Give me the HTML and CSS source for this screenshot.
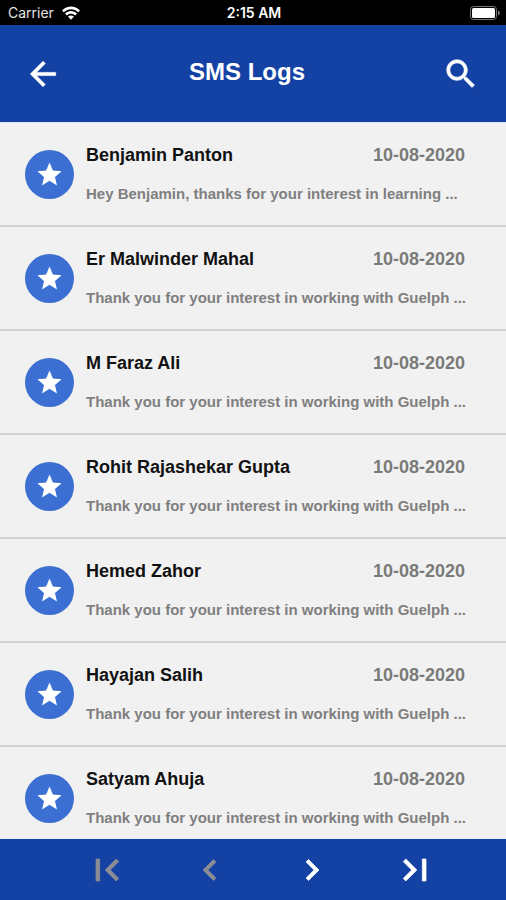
FILE: index.html
```html
<!DOCTYPE html>
<html lang="en">
<head>
<meta charset="utf-8">
<meta name="viewport" content="width=device-width, initial-scale=1">
<title>SMS Logs</title>
<link rel="stylesheet" href="styles.css">
</head>
<body>
<svg class="symbols" aria-hidden="true">
  <symbol id="star" viewBox="0 0 24 24"><path d="M12 17.27L18.18 21l-1.64-7.03L22 9.24l-7.19-.61L12 2 9.19 8.63 2 9.24l5.46 4.73L5.82 21z"/></symbol>
</svg>
<div class="status">
  <div class="carrier">
    <span>Carrier</span>
    <svg class="wifi" viewBox="0 0 18 14" aria-hidden="true">
      <path d="M0 4.4C5-.8 13-.8 18 4.4L16.2 6.3C12.2 2.2 5.8 2.2 1.8 6.3z"/>
      <path d="M3 7.5C6.400 4.100 11.600 4.100 15 7.500L13.200 9.400C10.800 7.100 7.200 7.100 4.800 9.400z"/>
      <path d="M6 10.600C7.700 9.100 10.300 9.100 12 10.600L9 13.700z"/>
    </svg>
  </div>
  <time class="clock">2:15 AM</time>
  <svg class="battery" viewBox="0 0 30 14" aria-hidden="true">
    <rect class="shell" x="0.500" y="0.500" width="26" height="13" rx="3"/>
    <rect x="2" y="2" width="23" height="10" rx="1.500"/>
    <path class="tip" d="M28 4.500c2.500.8 2.500 4.200 0 5z"/>
  </svg>
</div>
<header class="bar">
  <button class="icon-button" aria-label="Back"><svg viewBox="0 0 24 24"><path d="M20 11H7.830l5.590-5.590L12 4l-8 8 8 8 1.410-1.410L7.830 13H20z"/></svg></button>
  <h1>SMS Logs</h1>
  <button class="icon-button" aria-label="Search"><svg viewBox="0 0 24 24"><path d="M15.500 14h-.79l-.28-.27C15.410 12.590 16 11.110 16 9.500 16 5.910 13.090 3 9.500 3S3 5.910 3 9.500 5.910 16 9.500 16c1.610 0 3.090-.59 4.230-1.570l.27.28v.79l5 4.990L20.490 19zm-6 0C7.010 14 5 11.990 5 9.500S7.010 5 9.500 5 14 7.010 14 9.500 11.990 14 9.500 14z"/></svg></button>
</header>
<main class="logs">
  <ul>
    <li class="log"><span class="badge"><svg><use href="#star"/></svg></span><div class="body"><div class="top"><h2>Benjamin Panton</h2><time>10-08-2020</time></div><p>Hey Benjamin, thanks for your interest in learning ...</p></div></li>
    <li class="log"><span class="badge"><svg><use href="#star"/></svg></span><div class="body"><div class="top"><h2>Er Malwinder Mahal</h2><time>10-08-2020</time></div><p>Thank you for your interest in working with Guelph ...</p></div></li>
    <li class="log"><span class="badge"><svg><use href="#star"/></svg></span><div class="body"><div class="top"><h2>M Faraz Ali</h2><time>10-08-2020</time></div><p>Thank you for your interest in working with Guelph ...</p></div></li>
    <li class="log"><span class="badge"><svg><use href="#star"/></svg></span><div class="body"><div class="top"><h2>Rohit Rajashekar Gupta</h2><time>10-08-2020</time></div><p>Thank you for your interest in working with Guelph ...</p></div></li>
    <li class="log"><span class="badge"><svg><use href="#star"/></svg></span><div class="body"><div class="top"><h2>Hemed Zahor</h2><time>10-08-2020</time></div><p>Thank you for your interest in working with Guelph ...</p></div></li>
    <li class="log"><span class="badge"><svg><use href="#star"/></svg></span><div class="body"><div class="top"><h2>Hayajan Salih</h2><time>10-08-2020</time></div><p>Thank you for your interest in working with Guelph ...</p></div></li>
    <li class="log"><span class="badge"><svg><use href="#star"/></svg></span><div class="body"><div class="top"><h2>Satyam Ahuja</h2><time>10-08-2020</time></div><p>Thank you for your interest in working with Guelph ...</p></div></li>
  </ul>
</main>
<nav class="pager" aria-label="Pages">
  <button class="edge" aria-label="First page" disabled><svg viewBox="0 0 24 24"><path d="M18.410 16.590L13.820 12l4.590-4.590L17 6l-6 6 6 6zM6 6h2v12H6z"/></svg></button>
  <button aria-label="Previous page" disabled><svg viewBox="0 0 24 24"><path d="M15.410 7.410L14 6l-6 6 6 6 1.410-1.410L10.830 12z"/></svg></button>
  <button aria-label="Next page"><svg viewBox="0 0 24 24"><path d="M10 6L8.590 7.410 13.170 12l-4.580 4.590L10 18l6-6z"/></svg></button>
  <button class="edge" aria-label="Last page"><svg viewBox="0 0 24 24"><path d="M5.590 7.410L10.180 12l-4.590 4.590L7 18l6-6-6-6zM16 6h2v12h-2z"/></svg></button>
</nav>
</body>
</html>
```

FILE: styles.css
```css
* { box-sizing: border-box; }

body {
  margin: 0;
  height: 100vh;
  display: flex;
  flex-direction: column;
  background: #f1f1f1;
  font-family: "Liberation Sans", Arial, sans-serif;
}

h1, h2, p, ul { margin: 0; padding: 0; }
ul { list-style: none; }
svg { display: block; fill: currentColor; }

button {
  display: grid;
  place-items: center;
  padding: 0;
  border: 0;
  background: none;
  color: #fff;
}

button svg {
  stroke: currentColor;
  stroke-width: 0.4;
  stroke-linejoin: round;
}

.symbols { display: none; }

.status {
  flex: none;
  display: grid;
  grid-template-columns: 1fr auto 1fr;
  align-items: center;
  height: 25px;
  padding: 1px 6px 0 8px;
  background: #000;
  color: #e4e4e4;
  font: 14px/20px Inter, "Liberation Sans", sans-serif;
}

.carrier { display: flex; align-items: center; gap: 8px; }
.wifi { width: 18px; height: 14px; color: #fff; }
.clock { color: #fff; font-weight: 600; }
.battery { width: 30px; height: 14px; justify-self: end; color: #fff; }
.shell { fill: none; stroke: #777; }
.tip { fill: #777; }

.bar {
  flex: none;
  display: grid;
  grid-template-columns: 1fr auto 1fr;
  align-items: center;
  height: 97px;
  padding: 0 26px 0 24px;
  background: #1442a4;
  color: #fff;
}

.bar h1 { font-size: 24px; line-height: 30px; padding: 0 10px 4px 0; }
.icon-button:last-child { justify-self: end; }
.icon-button:first-child { justify-self: start; }
.icon-button svg { width: 38px; height: 38px; }

.logs {
  flex: 1;
  min-height: 0;
  overflow-y: auto;
  scrollbar-width: none;
  border-top: 1px solid #dfe4f2;
}

.log {
  display: flex;
  align-items: center;
  gap: 12px;
  height: 104px;
  padding: 1px 41px 0 25px;
  border-bottom: 2px solid #d3d3d3;
}

.badge {
  flex: none;
  display: grid;
  place-items: center;
  width: 49px;
  height: 49px;
  border-radius: 50%;
  background: #3c6fd2;
  color: #fff;
}

.badge svg { width: 29px; height: 29px; }

.body { flex: 1; min-width: 0; padding-bottom: 1px; }
.top { display: flex; justify-content: space-between; margin-bottom: 20px; }
.top h2 { font-size: 18px; line-height: 20px; color: #111; }
.top time { font-size: 18px; line-height: 20px; font-weight: bold; color: #7b7b7b; }
.body p {
  font-size: 15px;
  line-height: 18px;
  font-weight: bold;
  color: #7f7f7f;
  white-space: nowrap;
}

.pager {
  flex: none;
  display: flex;
  justify-content: space-around;
  align-items: center;
  height: 61px;
  padding: 0 39px 0 55px;
  background: #1442a4;
}

.pager svg { width: 42px; height: 42px; }
.pager .edge svg { width: 44px; height: 44px; }
.pager button:disabled { color: #8b8d94; }
```
